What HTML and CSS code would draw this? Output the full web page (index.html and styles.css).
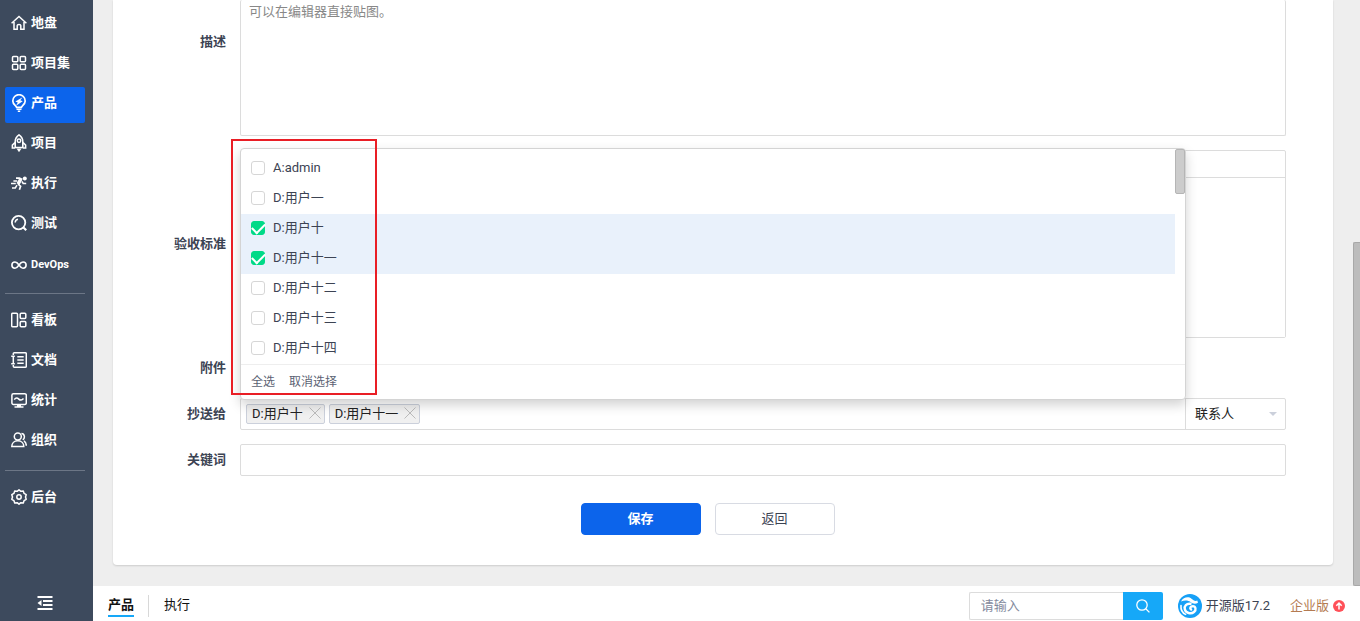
FILE: index.html
```html
<!DOCTYPE html>
<html lang="zh-CN">
<head>
<meta charset="utf-8">
<meta name="viewport" content="width=device-width, initial-scale=1">
<title>产品</title>
<link rel="stylesheet" href="styles.css">
</head>
<body>
<div class="app">
  <nav class="sidebar" aria-label="主导航">
    <ul class="menu">
      <li><a class="menu-item" href="#"><svg class="icon" viewBox="0 0 16 16"><path d="M.6 8.200 8 1.500l7.400 6.700M3 7v7.300h3.200V10.600q0-1.200 1.800-1.200t1.800 1.200v3.700H13V7"/></svg>地盘</a></li>
      <li><a class="menu-item" href="#"><svg class="icon" viewBox="0 0 16 16"><rect x="1.500" y="1.500" width="5.300" height="5.300" rx="1"/><rect x="9.200" y="1.500" width="5.300" height="5.300" rx="1"/><rect x="1.500" y="9.200" width="5.300" height="5.300" rx="1"/><rect x="9.200" y="9.200" width="5.300" height="5.300" rx="1"/></svg>项目集</a></li>
      <li><a class="menu-item active" href="#"><svg class="icon" viewBox="0 0 16 18"><path d="M5.600 13.400C5.300 11.500 1.800 10.500 1.800 6.900A6.200 6.200 0 0 1 14.200 6.900c0 3.600-3.500 4.600-3.800 6.500z" stroke-width="1.700"/><path d="M5.500 15.300h5M6.800 17.200h2.400"/><path class="solid" d="M11.600 3.200 4.400 7.500l2.400 1L5 11.700l6.700-4.400-2.400-1z"/></svg>产品</a></li>
      <li><a class="menu-item" href="#"><svg class="icon" viewBox="0 0 16 18"><path d="M8 .9C5.500 2.600 4.200 5 4.200 7.700v5.800h7.600V7.700C11.800 5 10.500 2.600 8 .9zM4.200 8.300 1.400 11v3h2.800M11.800 8.300l2.800 2.700v3h-2.800" stroke-width="1.600"/><circle cx="8" cy="6.800" r="1.700"/><path class="solid" d="M5.500 14.600h5L8 18.200z"/></svg>项目</a></li>
      <li><a class="menu-item" href="#"><svg class="icon" viewBox="0 0 16 16"><circle class="solid" cx="13.800" cy="3.500" r="2"/><path d="M9.800 4.200 7 9.200" stroke-width="3.400"/><path d="M5 3.200h3.500l2.800 1.300M7 9.200l2.600 2-1.200 3.600" stroke-width="1.700"/><path d="m11 6.500 1.200 2h3M6 10.200l-1.700 2.700H1M0 8.600h4.800M2.400 6h3.800"/></svg>执行</a></li>
      <li><a class="menu-item" href="#"><svg class="icon" viewBox="0 0 16 16"><circle cx="7.600" cy="7.600" r="6.700" stroke-width="1.800"/><path d="m12.200 12.300 3 3" stroke-width="2.200"/><path d="M4.200 7.500q.1-2.800 2.800-3.300"/></svg>测试</a></li>
      <li><a class="menu-item latin" href="#"><svg class="icon" viewBox="0 0 16 16"><path d="M8 8C6.500 5.800 5.500 5 4 5a3 3 0 0 0 0 6.200C5.500 11.200 6.500 10.200 8 8s2.500-3 4-3a3 3 0 0 1 0 6.200C10.500 11.200 9.500 10.200 8 8z" stroke-width="1.600"/></svg>DevOps</a></li>
    </ul>
    <ul class="menu">
      <li><a class="menu-item" href="#"><svg class="icon" viewBox="0 0 16 16"><rect x=".7" y="1.200" width="5.800" height="13.600" rx="1"/><rect x="9.200" y="1.200" width="5.600" height="5.400" rx="1"/><rect x="9.200" y="9.400" width="5.600" height="5.400" rx="1"/></svg>看板</a></li>
      <li><a class="menu-item" href="#"><svg class="icon" viewBox="0 0 16 16"><path d="M2.300 3V1.800Q2.300.8 3.300.8h11q1 0 1 1v12.400q0 1-1 1h-11q-1 0-1-1V13M2.300 5v6M.2 4.200h3.600M.2 11.800h3.600M6.300 4.800h6.400M6.300 8h6.400M6.300 11.200h6.400"/></svg>文档</a></li>
      <li><a class="menu-item" href="#"><svg class="icon" viewBox="0 0 16 16"><rect x=".9" y="1.700" width="14.400" height="10.800" rx="1.500"/><path d="M3.300 7.600c1.500-2.400 3.200-1.800 4.500-.5s3 1.500 4.700-.5M3.500 15h9"/><path class="solid" d="M6 12.500h4V15H6z"/></svg>统计</a></li>
      <li><a class="menu-item" href="#"><svg class="icon" viewBox="0 0 16 16"><circle cx="6.800" cy="4.500" r="3.500"/><path d="M.8 14.500c0-3.300 2.300-5.700 6-5.700s6 2.400 6 5.700zM10.400 1.600c3.300.2 4 4.400 1.400 6.300M13 8.800c1.500 1 2.300 2.700 2.300 5"/></svg>组织</a></li>
    </ul>
    <ul class="menu">
      <li><a class="menu-item" href="#"><svg class="icon" viewBox="0 0 16 16"><path d="m8 .8 1.900 1.500 2.400-.2.800 2.300 2.100 1.300L14.500 8l.7 2.300-2.100 1.300-.8 2.300-2.400-.2L8 15.200l-1.900-1.500-2.400.2-.8-2.300L.8 10.300 1.500 8 .8 5.700l2.100-1.300.8-2.300 2.400.2z" stroke-linejoin="round"/><circle cx="8" cy="8" r="2.200"/></svg>后台</a></li>
    </ul>
    <button class="collapse" type="button" aria-label="收起菜单"><svg viewBox="0 0 16 14"><path d="M.5 1h15M6 5h9.500M6 9h9.500M.5 13h15"/><path class="solid" d="M4.500 4v6L.5 7z"/></svg></button>
  </nav>

  <div class="page">
    <main class="content">
      <form class="card">
        <div class="row row-desc">
          <label class="label" for="desc">描述</label>
          <textarea class="editor" id="desc" placeholder="可以在编辑器直接贴图。"></textarea>
        </div>
        <div class="row">
          <label class="label" for="verify">验收标准</label>
          <div class="rich">
            <div class="toolbar"></div>
            <textarea class="rich-text" id="verify"></textarea>
          </div>
        </div>
        <div class="row">
          <span class="label">附件</span>
          <div></div>
        </div>
        <div class="row">
          <span class="label">抄送给</span>
          <div class="mail">
            <div class="picker">
              <span class="tag">D:用户十<button class="remove" type="button" aria-label="移除 D:用户十"><svg viewBox="0 0 12 12"><path d="m.5.5 11 11m0-11-11 11"/></svg></button></span>
              <span class="tag">D:用户十一<button class="remove" type="button" aria-label="移除 D:用户十一"><svg viewBox="0 0 12 12"><path d="m.5.5 11 11m0-11-11 11"/></svg></button></span>
              <div class="dropdown">
                <div class="options">
                  <label class="option"><input type="checkbox">A:admin</label>
                  <label class="option"><input type="checkbox">D:用户一</label>
                  <label class="option"><input type="checkbox" checked>D:用户十</label>
                  <label class="option"><input type="checkbox" checked>D:用户十一</label>
                  <label class="option"><input type="checkbox">D:用户十二</label>
                  <label class="option"><input type="checkbox">D:用户十三</label>
                  <label class="option"><input type="checkbox">D:用户十四</label>
                </div>
                <div class="actions">
                  <button type="button">全选</button>
                  <button type="button">取消选择</button>
                </div>
                <div class="thumb"></div>
                <div class="marker"></div>
              </div>
            </div>
            <div class="contacts">
              <select aria-label="联系人"><option>联系人</option></select>
            </div>
          </div>
        </div>
        <div class="row">
          <label class="label" for="keywords">关键词</label>
          <input class="text" id="keywords" type="text">
        </div>
        <div class="buttons">
          <button class="btn primary" type="submit">保存</button>
          <button class="btn" type="button">返回</button>
        </div>
      </form>
      <div class="page-thumb"></div>
    </main>
    <footer class="footer">
      <div class="crumbs">
        <a class="current" href="#">产品</a>
        <a href="#">执行</a>
      </div>
      <div class="tools">
        <div class="search">
          <input type="text" placeholder="请输入" aria-label="搜索">
          <button type="button" aria-label="搜索"><svg viewBox="0 0 14 14"><circle cx="6" cy="6" r="5.200"/><path d="m9.800 9.800 3.600 3.600"/></svg></button>
        </div>
        <a class="version" href="#"><svg class="logo" viewBox="0 0 24 24"><circle cx="12" cy="12" r="12" fill="#16a0f7"/><path d="M3 7.500C5.500 3 10.500 2.200 13.500 4.800c2 1.700 3.700 2.700 5.800 1.700l.7 2.200c-2.500 1.600-5.500 1-7.500-.7C10 6 6.500 6 3 7.500z" fill="#fff"/><path d="M12.500 9.800C8.500 9.200 6 12 6.800 15.200c1 4 6.200 5.200 9.200 2.800 2.700-2.200 1.600-5.800-1.200-5.900-2.500 0-3.300 2.500-1.700 3.500" fill="none" stroke="#fff" stroke-width="2.400" stroke-linecap="round"/><path d="M3 11.500c-.4 4 1.300 7.300 4.600 8.900" fill="none" stroke="#fff" stroke-width="1.600" stroke-linecap="round"/></svg>开源版17.2</a>
        <a class="upgrade" href="#">企业版<svg viewBox="0 0 12 12"><circle cx="6" cy="6" r="6" fill="#ff5058"/><path d="M6 9.500V3.200M3.300 5.800 6 3l2.700 2.800" fill="none" stroke="#fff" stroke-width="1.500"/></svg></a>
      </div>
    </footer>
  </div>
</div>
</body>
</html>
```

FILE: styles.css
```css
* { box-sizing: border-box; }

body {
  margin: 0;
  font-family: Roboto, "Noto Sans CJK SC", sans-serif;
  font-size: 13px;
  line-height: 20px;
  color: #3c4353;
}

button, input, select, textarea { font: inherit; color: inherit; margin: 0; }
button { cursor: pointer; }
a { color: inherit; text-decoration: none; }

.app { display: flex; height: 100vh; overflow: hidden; }

/* Sidebar */
.sidebar {
  display: flex;
  flex-direction: column;
  flex: 0 0 93px;
  padding: 7px 8px 9px 5px;
  background: #3d4a5d;
  color: #fff;
}
.menu {
  display: grid;
  gap: 4px;
  margin: 0;
  padding: 0;
  list-style: none;
}
.menu + .menu {
  margin-top: 10px;
  padding-top: 10px;
  border-top: 1px solid #6c7686;
}
.menu-item {
  display: flex;
  align-items: center;
  gap: 4px;
  height: 36px;
  padding: 0 0 4px 6px;
  border-radius: 2px;
  font-weight: 700;
}
.menu-item.active { background: #0c64eb; }
.menu-item.latin { padding-bottom: 0; font-size: 11px; }
.icon {
  flex: none;
  width: 16px;
  height: 18px;
  fill: none;
  stroke: #fff;
  stroke-width: 1.5;
}
.solid { fill: #fff; stroke: none; }
.collapse {
  align-self: center;
  margin-top: auto;
  padding: 2px;
  border: 0;
  background: none;
}
.collapse svg {
  display: block;
  width: 16px;
  height: 14px;
  stroke: #fff;
  stroke-width: 1.8;
}

/* Form */
.page { display: flex; flex: 1; flex-direction: column; min-width: 0; }
.content {
  position: relative;
  flex: 1;
  min-height: 0;
  padding: 0 27px 20px 20px;
  background: #eee;
  overflow: hidden;
}
.card {
  display: grid;
  gap: 14px;
  padding: 0 47px 30px 0;
  border-radius: 0 0 4px 4px;
  background: #fff;
  box-shadow: 0 1px 2px rgba(0, 0, 0, .14);
}
.row {
  display: grid;
  grid-template-columns: 113px minmax(0, 1fr);
  column-gap: 14px;
  align-items: center;
  min-height: 32px;
}
.label { font-weight: 700; text-align: right; }
.row-desc .label { align-self: start; padding-top: 32px; }
.editor, .rich, .text {
  display: block;
  width: 100%;
  border: 1px solid #dcdcdc;
  border-radius: 2px;
  background: #fff;
}
.editor {
  height: 136px;
  padding: 2px 8px;
  border-top: 0;
  resize: none;
}
.editor::placeholder { color: #888; opacity: 1; }
.toolbar { height: 27px; border-bottom: 1px solid #dcdcdc; }
.rich-text {
  display: block;
  width: 100%;
  height: 159px;
  border: 0;
  resize: none;
}
.text { height: 32px; padding: 0 8px; }
.mail {
  display: grid;
  grid-template-columns: minmax(0, 1fr) 100px;
  border: 1px solid #dcdcdc;
  border-radius: 2px;
}
.picker {
  position: relative;
  display: flex;
  align-items: center;
  gap: 4px;
  height: 30px;
  padding: 0 5px;
}
.tag {
  display: flex;
  align-items: center;
  gap: 6px;
  height: 20px;
  padding: 0 3px 0 5px;
  border: 1px solid #cbd0db;
  border-radius: 2px;
  background: #f0f0f0;
  color: #222;
}
.remove { padding: 0 0 2px; border: 0; background: none; }
.remove svg { display: block; width: 12px; height: 12px; stroke: #bbb; }
.contacts { position: relative; border-left: 1px solid #dcdcdc; }
.contacts select {
  width: 100%;
  height: 30px;
  padding: 0 9px;
  border: 0;
  background: none;
  color: #222;
  appearance: none;
}
.contacts::after {
  content: "";
  position: absolute;
  top: 13px;
  right: 8px;
  border: 4px solid transparent;
  border-top-color: #cbd0db;
  border-bottom: 0;
  pointer-events: none;
}

/* User list over the form */
.dropdown {
  position: absolute;
  z-index: 2;
  bottom: 29px;
  left: -1px;
  right: -1px;
  padding-top: 5px;
  border: 1px solid #d4d4d4;
  border-radius: 4px;
  background: #fff;
  box-shadow: 0 5px 12px rgba(0, 0, 0, .18);
}
.option {
  display: flex;
  align-items: center;
  gap: 8px;
  height: 30px;
  margin-right: 10px;
  padding: 0 10px 2px;
}
.option:has(:checked) { background: #e9f1fb; }
.option input {
  display: grid;
  place-items: center;
  width: 14px;
  height: 14px;
  border: 1px solid #d6d6d6;
  border-radius: 3px;
  background: #fff;
  appearance: none;
}
.option input:checked { border-color: #00da88; background: #00da88; }
.option input:checked::after {
  content: "";
  width: 11px;
  height: 6px;
  margin-bottom: 3px;
  border: solid #fff;
  border-width: 0 0 2px 2px;
  transform: rotate(-45deg);
}
.actions {
  display: flex;
  gap: 14px;
  height: 35px;
  padding: 0 10px;
  border-top: 1px solid #eee;
}
.actions button {
  padding: 0;
  border: 0;
  background: none;
  font-size: 12px;
  color: #5b6273;
}
.thumb {
  position: absolute;
  top: 0;
  right: 0;
  width: 10px;
  height: 45px;
  border: 1px solid #b5b5b5;
  border-radius: 2px;
  background: #ccc;
}
.marker {
  position: absolute;
  top: -10px;
  left: -10px;
  width: 146px;
  height: 256px;
  border: 2px solid #e91e25;
  pointer-events: none;
}

.buttons {
  display: flex;
  justify-content: center;
  gap: 14px;
  padding: 13px 0 0 16px;
}
.btn {
  width: 120px;
  height: 32px;
  padding: 0;
  border: 1px solid #d8dbe3;
  border-radius: 4px;
  background: #fff;
}
.btn.primary {
  border-color: #0c64eb;
  background: #0c64eb;
  color: #fff;
  font-weight: 700;
}
.page-thumb {
  position: absolute;
  right: 0;
  bottom: 0;
  width: 7px;
  height: 344px;
  border: 1px solid #a8a8a8;
  border-right: 0;
  border-radius: 2px 0 0 2px;
  background: #bcbcbc;
}

/* Footer */
.footer {
  display: flex;
  justify-content: space-between;
  height: 35px;
  padding: 0 15px;
  background: #fff;
}
.crumbs { display: flex; align-items: center; padding-top: 5px; color: #111; }
.crumbs a { height: 22px; }
.crumbs .current { border-bottom: 2px solid #16a8f8; font-weight: 700; }
.crumbs a + a { margin-left: 14px; padding-left: 15px; border-left: 1px solid #d8d8d8; }
.tools { display: flex; align-items: center; padding-top: 5px; }
.search { display: flex; height: 28px; margin-right: 15px; }
.search input {
  width: 154px;
  padding: 0 11px;
  border: 1px solid #dcdcdc;
  border-right: 0;
  border-radius: 2px 0 0 2px;
}
.search input::placeholder { color: #838a9d; opacity: 1; }
.search button {
  width: 40px;
  padding: 0 13px;
  border: 0;
  border-radius: 0 2px 2px 0;
  background: #16a8f8;
}
.search svg { display: block; width: 14px; height: 14px; fill: none; stroke: #fff; stroke-width: 1.3; }
.version { display: flex; align-items: center; gap: 4px; margin-right: 20px; }
.logo { width: 24px; height: 24px; }
.upgrade { display: flex; align-items: center; gap: 4px; color: #b47b52; }
.upgrade svg { width: 12px; height: 12px; }
```
